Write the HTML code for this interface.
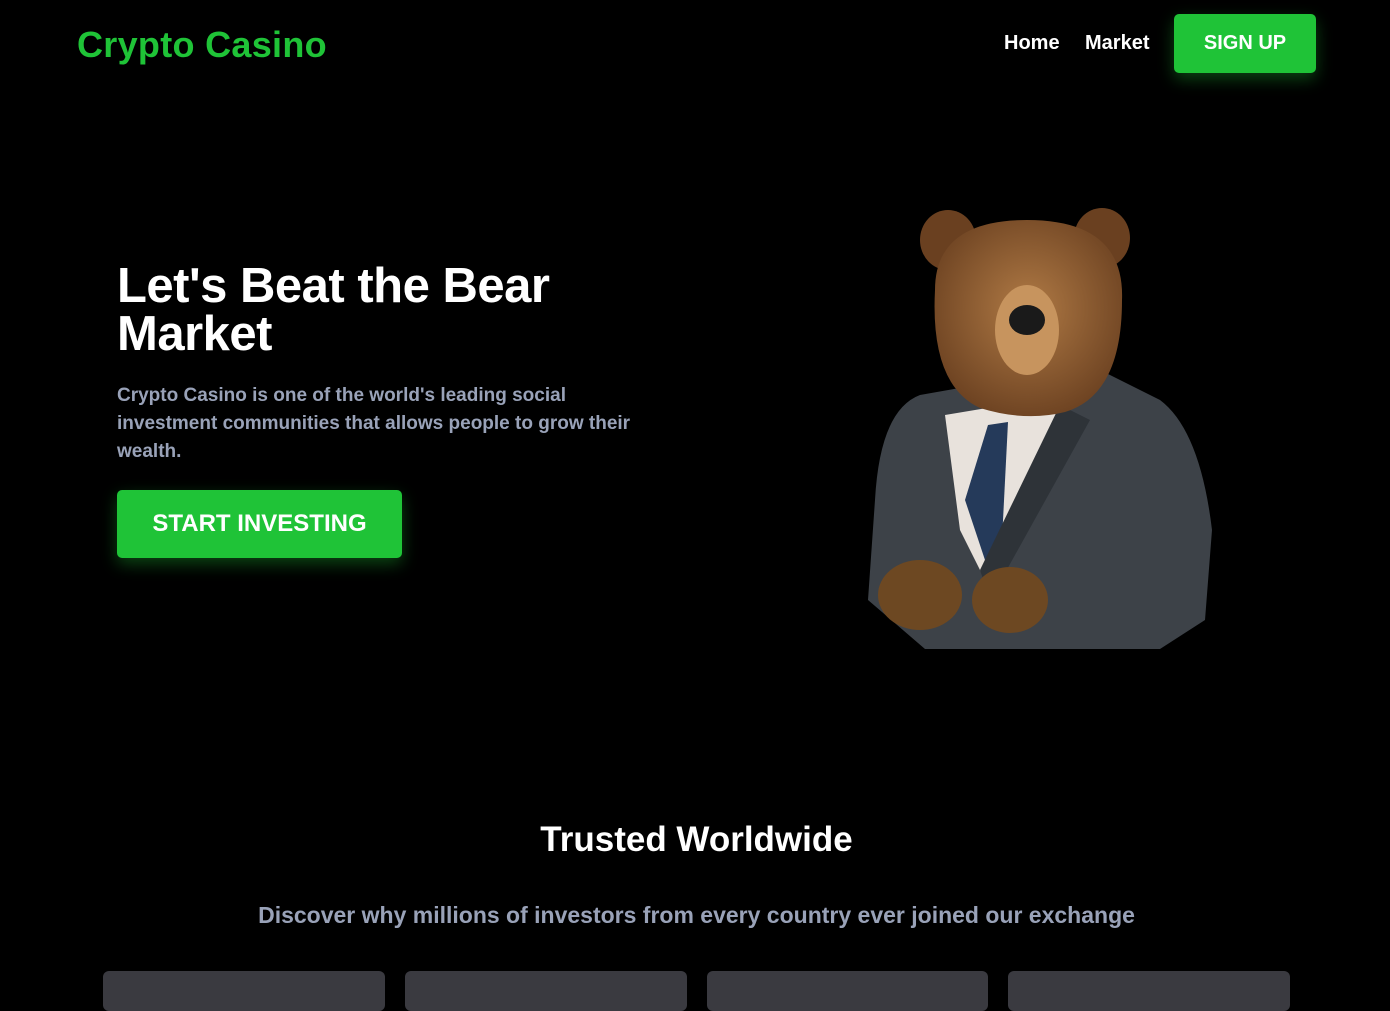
<!DOCTYPE html>
<html><head><meta charset="utf-8"><style>
*{margin:0;padding:0;box-sizing:border-box}
body{width:1390px;height:999px;background:#000;font-family:"Liberation Sans",sans-serif;overflow:hidden;position:relative;color:#fff}
.logo{position:absolute;left:77px;top:24px;font-size:36px;font-weight:bold;color:#1fc337;letter-spacing:0.3px}
.nav{position:absolute;top:32px;font-size:20px;font-weight:bold}
.btn{position:absolute;background:#1fc337;color:#fff;font-weight:bold;border-radius:5px;display:flex;align-items:center;justify-content:center;box-shadow:0 6px 16px rgba(31,195,55,.35)}
h1{position:absolute;left:117px;top:262px;font-size:49px;line-height:48px;font-weight:bold;letter-spacing:-0.5px}
.p{position:absolute;left:117px;top:382px;width:540px;font-size:19px;line-height:28px;color:#99a2b8;font-weight:bold}
h2{position:absolute;left:0;width:1393px;text-align:center;top:820px;font-size:35px;font-weight:bold}
.sub{position:absolute;left:0;width:1393px;text-align:center;top:902px;font-size:23px;color:#99a2b8;font-weight:bold}
.card{position:absolute;top:971px;height:40px;width:282px;background:#3a3a40;border-radius:6px}
</style></head><body>
<div class="logo">Crypto Casino</div>
<div class="nav" style="left:1004px">Home</div>
<div class="nav" style="left:1085px">Market</div>
<div class="btn" style="left:1174px;top:14px;width:142px;height:59px;font-size:20px">SIGN UP</div>
<h1>Let's Beat the Bear<br>Market</h1>
<div class="p">Crypto Casino is one of the world's leading social investment communities that allows people to grow their wealth.</div>
<div class="btn" style="left:117px;top:490px;width:285px;height:68px;font-size:24px">START INVESTING</div>
<svg style="position:absolute;left:860px;top:200px" width="360" height="450" viewBox="0 0 360 450">
<defs><radialGradient id="f" cx="50%" cy="45%" r="60%"><stop offset="0" stop-color="#b07a45"/><stop offset="1" stop-color="#6a4020"/></radialGradient></defs>
<path d="M60 195 Q20 210 15 300 L8 400 L65 449 L300 449 L345 420 L352 330 Q340 230 300 200 L230 165 Z" fill="#3d4248"/>
<path d="M85 215 L175 200 L205 210 L150 330 L130 390 L100 330 Z" fill="#e8e2dc"/>
<path d="M128 225 L148 222 L142 340 L125 360 L105 300 Z" fill="#253a5a"/>
<path d="M200 205 L120 370 L130 400 L230 220 Z" fill="#2e3338"/>
<ellipse cx="88" cy="40" rx="28" ry="30" fill="#6a4020"/>
<ellipse cx="242" cy="38" rx="28" ry="30" fill="#6a4020"/>
<path d="M75 90 Q75 20 167 20 Q265 20 262 100 Q262 195 205 212 Q165 222 120 208 Q70 185 75 90 Z" fill="url(#f)"/>
<ellipse cx="167" cy="130" rx="32" ry="45" fill="#c7945e"/>
<ellipse cx="167" cy="120" rx="18" ry="15" fill="#1a1a1a"/>
<ellipse cx="60" cy="395" rx="42" ry="35" fill="#6d4822"/>
<ellipse cx="150" cy="400" rx="38" ry="33" fill="#6d4822"/>
</svg>
<h2>Trusted Worldwide</h2>
<div class="sub">Discover why millions of investors from every country ever joined our exchange</div>
<div class="card" style="left:103px"></div>
<div class="card" style="left:405px"></div>
<div class="card" style="left:707px;width:281px"></div>
<div class="card" style="left:1008px"></div>
</body></html>
